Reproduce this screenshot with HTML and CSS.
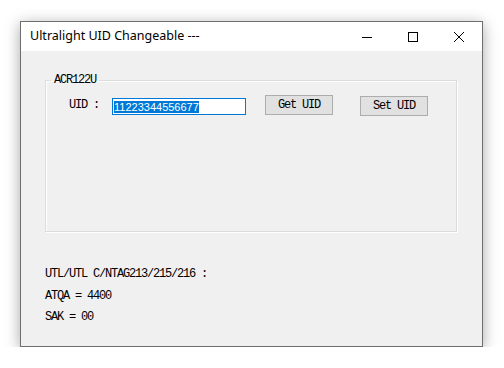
FILE: index.html
```html
<!DOCTYPE html>
<html>
<head>
    <title>Ultralight UID Changeable</title>
    <meta name="viewport" content="width=device-width, initial-scale=1.0">
    <link rel="stylesheet" href="styles.css">
</head>
<body>
    <div class="window">
        <div class="titlebar">
            <span class="title">Ultralight UID Changeable ---</span>
            <div class="caption">
                <span class="cap-btn">
                    <svg width="12" height="12" viewBox="0 0 12 12"><path d="M1 6.5h10" stroke="#000" stroke-width="1"/></svg>
                </span>
                <span class="cap-btn">
                    <svg width="12" height="12" viewBox="0 0 12 12"><rect x="1.5" y="1.5" width="9" height="9" fill="none" stroke="#000" stroke-width="1"/></svg>
                </span>
                <span class="cap-btn">
                    <svg width="12" height="12" viewBox="0 0 12 12"><path d="M1 1L11 11M11 1L1 11" stroke="#000" stroke-width="1"/></svg>
                </span>
            </div>
        </div>

        <div class="client">
            <fieldset class="group">
                <legend>ACR122U</legend>
                <div class="uid-row">
                    <label class="uid-label" for="uid">UID :</label>
                    <div class="uid-input" id="uid"><span class="sel">11223344556677</span></div>
                    <button class="btn btn-get">Get UID</button>
                    <button class="btn btn-set">Set UID</button>
                </div>
            </fieldset>

            <div class="info">
                <p>UTL/UTL C/NTAG213/215/216 :</p>
                <p>ATQA = 4400</p>
                <p>SAK = 00</p>
            </div>
        </div>
    </div>
</body>
</html>
```

FILE: styles.css
```css
body {
    margin: 0;
    background-color: #fff;
    font-family: "Liberation Mono", monospace;
}

.window {
    margin: 21px 0 0 20px;
    width: 461px;
    height: 324px;
    border: 1px solid #6e6e6e;
    background-color: #f0f0f0;
    box-shadow: 0 3px 14px rgba(0, 0, 0, 0.35);
    display: flex;
    flex-direction: column;
}

.titlebar {
    height: 29px;
    background-color: #fff;
    display: flex;
    align-items: center;
}

.title {
    font-family: "Noto Sans", sans-serif;
    font-size: 12.5px;
    color: #000;
    padding: 0 0 2px 9px;
    flex: 1;
}

.caption {
    display: flex;
    height: 100%;
}

.cap-btn {
    width: 46px;
    display: flex;
    align-items: center;
    justify-content: center;
}

.client {
    flex: 1;
    padding: 0 25px 0 24px;
}

.group {
    margin: 22px 0 0 0;
    padding: 0;
    height: 159px;
    box-sizing: border-box;
    border: 1px solid #dcdcdc;
    box-shadow: 1px 1px 0 #fff, inset 1px 1px 0 #fff;
}

.group legend {
    margin-left: 5px;
    padding: 0 3px;
    font-size: 12px;
    letter-spacing: -1.2px;
    line-height: 14px;
    color: #000;
}

.uid-row {
    display: flex;
    align-items: center;
    padding: 7px 0 0 23px;
    font-size: 12px;
    letter-spacing: -1.2px;
}

.uid-label {
    width: 43px;
}

.uid-input {
    width: 131px;
    height: 15px;
    border: 1px solid #0078d7;
    background-color: #fff;
    display: flex;
    align-items: center;
    padding-left: 1px;
    margin-top: 3px;
    font-family: "Liberation Sans", sans-serif;
    letter-spacing: 0;
}

.sel {
    background-color: #0078d7;
    color: #fff;
    line-height: 12px;
    font-size: 11px;
}

.btn {
    width: 68px;
    height: 20px;
    padding: 0;
    background-color: #e1e1e1;
    border: 1px solid #adadad;
    font-family: "Liberation Mono", monospace;
    font-size: 12px;
    letter-spacing: -1.2px;
    color: #000;
}

.btn-get {
    margin-left: 19px;
}

.btn-set {
    margin-left: 27px;
    margin-top: 2px;
}

.info {
    padding-top: 32px;
}

.info p {
    margin: 0;
    font-size: 12px;
    letter-spacing: -1.2px;
    line-height: 21.5px;
    color: #000;
}
```
